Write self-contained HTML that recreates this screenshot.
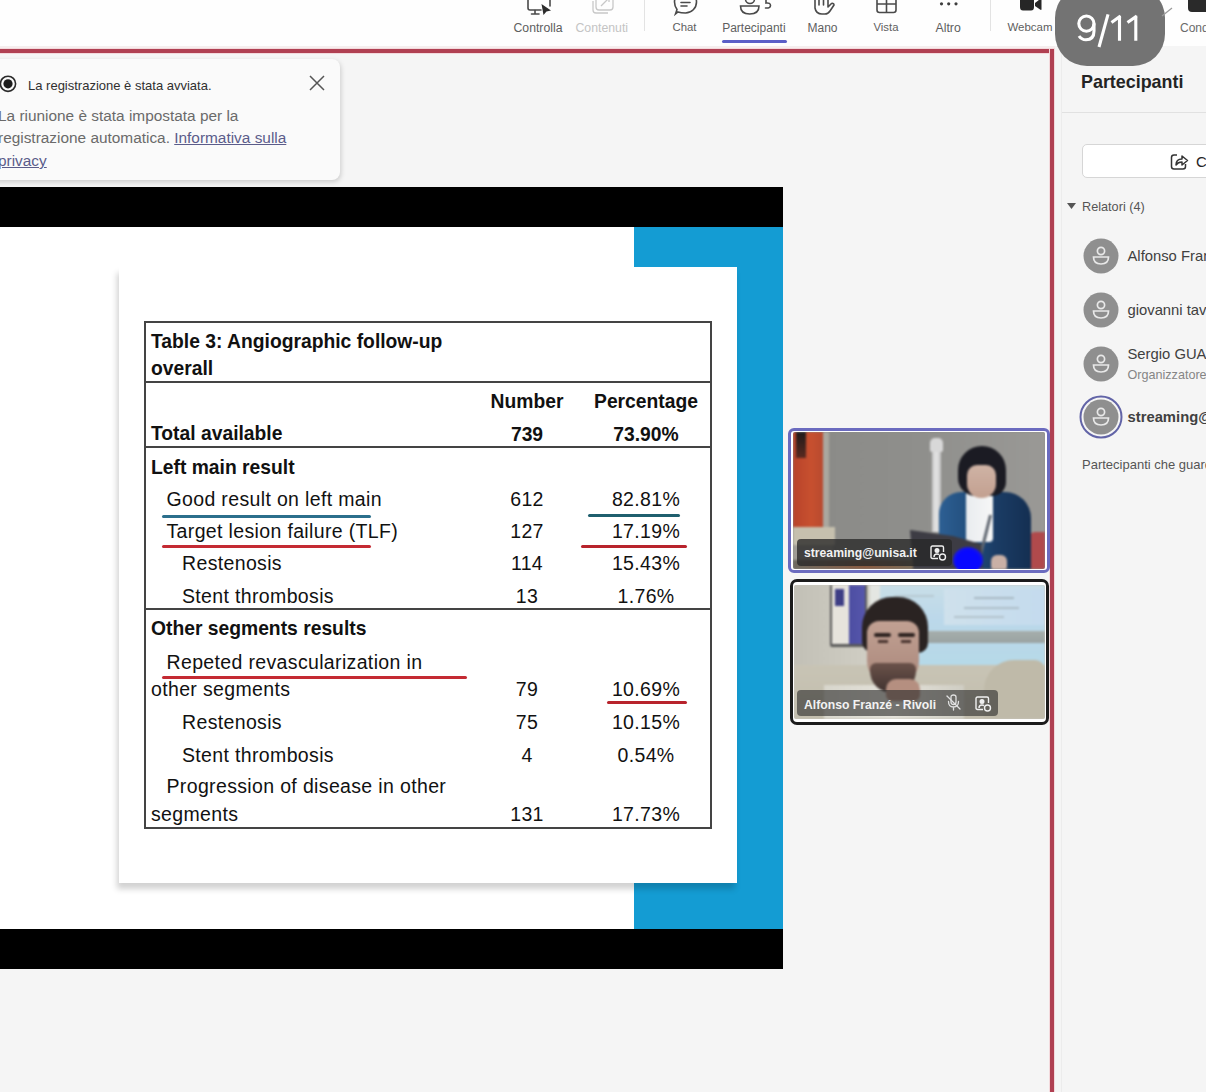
<!DOCTYPE html>
<html><head><meta charset="utf-8"><style>
html,body{margin:0;padding:0}
body{width:1206px;height:1092px;position:relative;overflow:hidden;background:#f5f5f5;font-family:"Liberation Sans",sans-serif}
.t{position:absolute;white-space:nowrap;line-height:1}
.r{position:absolute}
</style></head><body>
<div class="r" style="left:0px;top:0px;width:1206px;height:46px;background:#fefefe"></div>
<div class="r" style="left:0px;top:46px;width:1206px;height:3px;background:#f6eeee"></div>
<div class="t " style="left:513.5px;top:21.64px;font-size:12.24px;font-weight:normal;color:#5f5f5f;">Controlla</div>
<div class="t " style="left:575.5px;top:21.60px;font-size:12.29px;font-weight:normal;color:#c4c4c4;">Contenuti</div>
<div class="t " style="left:672.5px;top:22.38px;font-size:11.36px;font-weight:normal;color:#5f5f5f;">Chat</div>
<div class="t " style="left:722.2px;top:21.84px;font-size:12.0px;font-weight:normal;color:#5f5f5f;">Partecipanti</div>
<div class="t " style="left:807.5px;top:21.84px;font-size:12px;font-weight:normal;color:#5f5f5f;">Mano</div>
<div class="t " style="left:873.5px;top:22.40px;font-size:11.34px;font-weight:normal;color:#5f5f5f;">Vista</div>
<div class="t " style="left:935.5px;top:21.59px;font-size:12.3px;font-weight:normal;color:#5f5f5f;">Altro</div>
<div class="t " style="left:1007.5px;top:22.30px;font-size:11.46px;font-weight:normal;color:#5f5f5f;">Webcam</div>
<div class="r" style="left:644px;top:0px;width:1px;height:31px;background:#e3e3e3"></div>
<div class="r" style="left:990px;top:0px;width:1px;height:31px;background:#e3e3e3"></div>
<div class="r" style="left:722px;top:40px;width:65px;height:3px;background:#5b5fc7;border-radius:2px"></div>
<div class="r" style="left:0px;top:53px;width:1050px;height:1039px;background:#f5f5f5"></div>
<div class="r" style="left:0px;top:48px;width:1055px;height:6px;background:#f3d9dc"></div>
<div class="r" style="left:0px;top:49px;width:1054px;height:4px;background:#b04052"></div>
<div class="r" style="left:1049px;top:49px;width:6px;height:1043px;background:#f3d9dc"></div>
<div class="r" style="left:1050px;top:49px;width:4px;height:1043px;background:#b04052"></div>
<div class="r" style="left:1055px;top:46px;width:151px;height:1046px;background:#f5f5f5"></div>
<div class="r" style="left:1061px;top:46px;width:1px;height:1046px;background:#ececec"></div>
<div class="t " style="left:1081px;top:73.85px;font-size:17.9px;font-weight:bold;color:#242424;">Partecipanti</div>
<div class="r" style="left:1062px;top:112px;width:144px;height:1px;background:#e1e1e1"></div>
<div class="r" style="left:1082px;top:144px;width:140px;height:34px;background:#fff;border:1px solid #d6d6d6;border-radius:5px;box-sizing:border-box"></div>
<div class="t " style="left:1196px;top:154.30px;font-size:15px;font-weight:normal;color:#242424;">C</div>
<div class="t " style="left:1082px;top:201.25px;font-size:12.7px;font-weight:normal;color:#555;">Relatori (4)</div>
<div class="t " style="left:1127.5px;top:249.47px;font-size:14.8px;font-weight:normal;color:#404040;">Alfonso Franzé - Rivoli</div>
<div class="t " style="left:1127.5px;top:303.47px;font-size:14.8px;font-weight:normal;color:#404040;">giovanni tavolieri</div>
<div class="t " style="left:1127.5px;top:347.47px;font-size:14.8px;font-weight:normal;color:#404040;">Sergio GUARINI</div>
<div class="t " style="left:1127.5px;top:368.83px;font-size:12.6px;font-weight:normal;color:#858585;">Organizzatore</div>
<div class="t " style="left:1127.5px;top:410.47px;font-size:14.8px;font-weight:bold;color:#404040;">streaming@unisa.it</div>
<div class="t " style="left:1082px;top:458.00px;font-size:13px;font-weight:normal;color:#555;">Partecipanti che guardano</div>
<div class="r" style="left:-12px;top:59px;width:352px;height:121px;background:#fafafa;border-radius:8px;box-shadow:1px 2px 5px rgba(0,0,0,0.17)"></div>
<div class="t " style="left:28px;top:78.50px;font-size:13.0px;font-weight:normal;color:#303030;">La registrazione è stata avviata.</div>
<div class="t " style="left:-2px;top:107.96px;font-size:15.4px;font-weight:normal;color:#6a6a6a;">La riunione è stata impostata per la</div>
<div class="t " style="left:-2px;top:130.46px;font-size:15.4px;font-weight:normal;color:#6a6a6a;">registrazione automatica. <span style="color:#5b5c8a;text-decoration:underline">Informativa sulla</span></div>
<div class="t " style="left:-2px;top:152.96px;font-size:15.4px;font-weight:normal;color:#6a6a6a;"><span style="color:#5b5c8a;text-decoration:underline">privacy</span></div>
<div class="r" style="left:0px;top:187px;width:783px;height:40px;background:#000"></div>
<div class="r" style="left:0px;top:227px;width:783px;height:702px;background:#fff"></div>
<div class="r" style="left:634px;top:227px;width:149px;height:702px;background:#149cd3"></div>
<div class="r" style="left:119px;top:267px;width:618px;height:616px;background:#fff;box-shadow:-2px 6px 6px rgba(0,0,0,0.18)"></div>
<div class="r" style="left:0px;top:929px;width:783px;height:40px;background:#000"></div>
<div class="r" style="left:144px;top:321px;width:568px;height:508px;border:2px solid #444;box-sizing:border-box"></div>
<div class="r" style="left:144px;top:381px;width:568px;height:2px;background:#444"></div>
<div class="r" style="left:144px;top:446px;width:568px;height:2px;background:#444"></div>
<div class="r" style="left:144px;top:608px;width:568px;height:2px;background:#444"></div>
<div class="t " style="left:151px;top:331.76px;font-size:19.3px;font-weight:bold;color:#111;">Table 3: Angiographic follow-up</div>
<div class="t " style="left:151px;top:359.06px;font-size:19.3px;font-weight:bold;color:#111;">overall</div>
<div class="t" style="left:427.0px;width:200px;text-align:center;top:392.36px;font-size:19.3px;font-weight:bold;color:#111;">Number</div>
<div class="t" style="left:546.0px;width:200px;text-align:center;top:392.36px;font-size:19.3px;font-weight:bold;color:#111;">Percentage</div>
<div class="t " style="left:151px;top:424.36px;font-size:19.3px;font-weight:bold;color:#111;">Total available</div>
<div class="t" style="left:427.0px;width:200px;text-align:center;top:425.36px;font-size:19.3px;font-weight:bold;color:#111;">739</div>
<div class="t" style="left:546.0px;width:200px;text-align:center;top:425.36px;font-size:19.3px;font-weight:bold;color:#111;">73.90%</div>
<div class="t " style="left:151px;top:457.86px;font-size:19.3px;font-weight:bold;color:#111;">Left main result</div>
<div class="t " style="left:166.5px;top:489.89px;font-size:19.5px;font-weight:normal;color:#111;letter-spacing:0.35px">Good result on left main</div>
<div class="t" style="left:427.0px;width:200px;text-align:center;top:489.89px;font-size:19.5px;font-weight:normal;color:#111;letter-spacing:0.35px">612</div>
<div class="t" style="left:546.0px;width:200px;text-align:center;top:489.89px;font-size:19.5px;font-weight:normal;color:#111;letter-spacing:0.35px">82.81%</div>
<div class="t " style="left:166.5px;top:521.99px;font-size:19.5px;font-weight:normal;color:#111;letter-spacing:0.35px">Target lesion failure (TLF)</div>
<div class="t" style="left:427.0px;width:200px;text-align:center;top:521.99px;font-size:19.5px;font-weight:normal;color:#111;letter-spacing:0.35px">127</div>
<div class="t" style="left:546.0px;width:200px;text-align:center;top:521.99px;font-size:19.5px;font-weight:normal;color:#111;letter-spacing:0.35px">17.19%</div>
<div class="t " style="left:182px;top:554.19px;font-size:19.5px;font-weight:normal;color:#111;letter-spacing:0.35px">Restenosis</div>
<div class="t" style="left:427.0px;width:200px;text-align:center;top:554.19px;font-size:19.5px;font-weight:normal;color:#111;letter-spacing:0.35px">114</div>
<div class="t" style="left:546.0px;width:200px;text-align:center;top:554.19px;font-size:19.5px;font-weight:normal;color:#111;letter-spacing:0.35px">15.43%</div>
<div class="t " style="left:182px;top:587.19px;font-size:19.5px;font-weight:normal;color:#111;letter-spacing:0.35px">Stent thrombosis</div>
<div class="t" style="left:427.0px;width:200px;text-align:center;top:587.19px;font-size:19.5px;font-weight:normal;color:#111;letter-spacing:0.35px">13</div>
<div class="t" style="left:546.0px;width:200px;text-align:center;top:587.19px;font-size:19.5px;font-weight:normal;color:#111;letter-spacing:0.35px">1.76%</div>
<div class="t " style="left:151px;top:618.66px;font-size:19.3px;font-weight:bold;color:#111;">Other segments results</div>
<div class="t " style="left:166.5px;top:652.59px;font-size:19.5px;font-weight:normal;color:#111;letter-spacing:0.35px">Repeted revascularization in</div>
<div class="t " style="left:151px;top:680.09px;font-size:19.5px;font-weight:normal;color:#111;letter-spacing:0.35px">other segments</div>
<div class="t" style="left:427.0px;width:200px;text-align:center;top:680.09px;font-size:19.5px;font-weight:normal;color:#111;letter-spacing:0.35px">79</div>
<div class="t" style="left:546.0px;width:200px;text-align:center;top:680.09px;font-size:19.5px;font-weight:normal;color:#111;letter-spacing:0.35px">10.69%</div>
<div class="t " style="left:182px;top:712.99px;font-size:19.5px;font-weight:normal;color:#111;letter-spacing:0.35px">Restenosis</div>
<div class="t" style="left:427.0px;width:200px;text-align:center;top:712.99px;font-size:19.5px;font-weight:normal;color:#111;letter-spacing:0.35px">75</div>
<div class="t" style="left:546.0px;width:200px;text-align:center;top:712.99px;font-size:19.5px;font-weight:normal;color:#111;letter-spacing:0.35px">10.15%</div>
<div class="t " style="left:182px;top:745.99px;font-size:19.5px;font-weight:normal;color:#111;letter-spacing:0.35px">Stent thrombosis</div>
<div class="t" style="left:427.0px;width:200px;text-align:center;top:745.99px;font-size:19.5px;font-weight:normal;color:#111;letter-spacing:0.35px">4</div>
<div class="t" style="left:546.0px;width:200px;text-align:center;top:745.99px;font-size:19.5px;font-weight:normal;color:#111;letter-spacing:0.35px">0.54%</div>
<div class="t " style="left:166.5px;top:777.19px;font-size:19.5px;font-weight:normal;color:#111;letter-spacing:0.35px">Progression of disease in other</div>
<div class="t " style="left:151px;top:805.49px;font-size:19.5px;font-weight:normal;color:#111;letter-spacing:0.35px">segments</div>
<div class="t" style="left:427.0px;width:200px;text-align:center;top:805.49px;font-size:19.5px;font-weight:normal;color:#111;letter-spacing:0.35px">131</div>
<div class="t" style="left:546.0px;width:200px;text-align:center;top:805.49px;font-size:19.5px;font-weight:normal;color:#111;letter-spacing:0.35px">17.73%</div>
<div class="r" style="left:162px;top:514.5px;width:209px;height:3px;background:#2b6f8c;border-radius:2px"></div>
<div class="r" style="left:588px;top:514px;width:92px;height:3px;background:#1f5f6e;border-radius:2px"></div>
<div class="r" style="left:162px;top:545px;width:209px;height:3px;background:#c42a33;border-radius:2px"></div>
<div class="r" style="left:581px;top:544.5px;width:106px;height:3px;background:#b8232c;border-radius:2px"></div>
<div class="r" style="left:162px;top:676px;width:305px;height:3px;background:#c42a33;border-radius:2px"></div>
<div class="r" style="left:607px;top:700.5px;width:80px;height:3px;background:#b8232c;border-radius:2px"></div>
<div class="r" style="left:788px;top:428px;width:262px;height:145px;border:3px solid #6b6bbf;border-radius:6px;box-sizing:border-box;background:#fff"></div>
<div class="r" style="left:793px;top:432px;width:252px;height:137px;overflow:hidden;border-radius:2px;background:#8d8d8a"><div class="r" style="left:0;top:0;width:252px;height:137px;filter:blur(1.2px);background:linear-gradient(90deg,#8a8a87 0%,#8f8f8c 50%,#9a9996 100%)"><div class="r" style="left:0px;top:0px;width:30px;height:96px;background:linear-gradient(90deg,#b8432a,#c7502f 60%,#b84a30)"></div>
<div class="r" style="left:3px;top:0px;width:10px;height:26px;background:linear-gradient(180deg,#1e1a1a,#5a2a20)"></div>
<div class="r" style="left:30px;top:0px;width:6px;height:100px;background:#aaa79f"></div>
<div class="r" style="left:0px;top:95px;width:42px;height:18px;background:#c6c0ae"></div>
<div class="r" style="left:0px;top:113px;width:40px;height:24px;background:#9f9c95"></div>
<div class="r" style="left:139px;top:16px;width:9px;height:84px;background:linear-gradient(90deg,#c8c8c8,#e6e6e6,#c0c0c0)"></div>
<div class="r" style="left:137px;top:6px;width:13px;height:14px;background:#d8d8d8;border-radius:5px 5px 2px 2px"></div>
<div class="r" style="left:236px;top:100px;width:16px;height:37px;background:#b04a4c;border-radius:6px 0 0 0"></div>
<div class="r" style="left:146px;top:60px;width:92px;height:77px;background:linear-gradient(90deg,#2d5f93 0%,#23507f 30%,#1b3d66 60%,#142f52 100%);border-radius:22px 26px 0 0"></div>
<div class="r" style="left:173px;top:60px;width:27px;height:50px;background:linear-gradient(90deg,#e9ecef,#f7f7f7);border-radius:0 0 4px 4px"></div>
<div class="r" style="left:165px;top:14px;width:48px;height:50px;background:#1b1b23;border-radius:24px 24px 14px 18px"></div>
<div class="r" style="left:174px;top:33px;width:29px;height:33px;background:linear-gradient(180deg,#cfb3a5,#c3a090);border-radius:10px 10px 14px 14px"></div>
<div class="r" style="left:196px;top:83px;width:3px;height:55px;background:#5f6670;transform:rotate(14deg);transform-origin:top"></div>
<svg class="r" style="left:0;top:0" width="252" height="137"><path d="M117 98 L160 104 L188 112 L190 137 L120 137 Z" fill="#3d3c44"/></svg><div class="r" style="left:160px;top:115px;width:30px;height:26px;background:radial-gradient(ellipse at 50% 60%,#0808ff 55%,#2222c8 80%,#3d3c44 100%);border-radius:50%"></div>
<div class="r" style="left:198px;top:123px;width:16px;height:14px;background:#c9b0a6;border-radius:6px 6px 2px 2px"></div>
<div class="r" style="left:0px;top:128px;width:120px;height:9px;background:linear-gradient(90deg,#6d6a60,#8a5a40 60%,#7a6a55)"></div>
</div></div>
<div class="r" style="left:790px;top:579px;width:259px;height:146px;border:3px solid #1b1b1b;border-radius:7px;box-sizing:border-box;background:#fff"></div>
<div class="r" style="left:794px;top:585px;width:251px;height:134px;overflow:hidden;border-radius:2px;background:#c8c6bc"><div class="r" style="left:0;top:0;width:251px;height:134px;filter:blur(1.2px);background:linear-gradient(90deg,#c2c0b6,#d0cec4 30%,#c9c6bb)"><div class="r" style="left:76px;top:0px;width:175px;height:80px;background:linear-gradient(180deg,#c9dfe8 0%,#bcd8ea 40%,#b6d9e8 100%)"></div>
<div class="r" style="left:150px;top:4px;width:101px;height:36px;background:linear-gradient(90deg,#cfe1ec,#c4dbee)"></div>
<div class="r" style="left:180px;top:12px;width:40px;height:2px;background:#a8b9c4"></div>
<div class="r" style="left:170px;top:22px;width:55px;height:2px;background:#aebfc9"></div>
<div class="r" style="left:160px;top:31px;width:50px;height:2px;background:#b3c3cc"></div>
<div class="r" style="left:100px;top:10px;width:40px;height:2px;background:#b7c9d2"></div>
<div class="r" style="left:92px;top:20px;width:30px;height:2px;background:#b7c9d2"></div>
<div class="r" style="left:120px;top:46px;width:131px;height:12px;background:linear-gradient(180deg,#a6aeac,#9aa3a2)"></div>
<div class="r" style="left:76px;top:0px;width:10px;height:80px;background:#e4e6e2"></div>
<div class="r" style="left:0px;top:80px;width:251px;height:54px;background:linear-gradient(180deg,#c8c4b5,#c2bdad)"></div>
<div class="r" style="left:190px;top:75px;width:61px;height:59px;background:#bfbaa9;border-radius:30px 10px 0 0"></div>
<div class="r" style="left:36px;top:0px;width:37px;height:62px;background:#5a5a5a;border-radius:0 0 2px 2px"></div>
<div class="r" style="left:38px;top:0px;width:33px;height:59px;background:linear-gradient(90deg,#e6e3dc 0%,#e6e3dc 52%,#4d4ea2 53%,#5656ac 100%)"></div>
<div class="r" style="left:41px;top:4px;width:9px;height:17px;background:#3d3d85"></div>
<div class="r" style="left:30px;top:100px;width:140px;height:34px;background:linear-gradient(90deg,#d8d6cc,#e4e2da 50%,#cfcdc3)"></div>
<div class="r" style="left:68px;top:12px;width:66px;height:56px;background:#2a2322;border-radius:30px 30px 10px 12px"></div>
<div class="r" style="left:73px;top:36px;width:52px;height:64px;background:linear-gradient(180deg,#c2a193,#a9877b);border-radius:12px 12px 24px 24px"></div>
<div class="r" style="left:80px;top:48px;width:17px;height:4px;background:#2e2320;border-radius:2px"></div>
<div class="r" style="left:104px;top:48px;width:17px;height:4px;background:#2e2320;border-radius:2px"></div>
<div class="r" style="left:84px;top:55px;width:10px;height:3px;background:#4a3530"></div>
<div class="r" style="left:107px;top:55px;width:10px;height:3px;background:#4a3530"></div>
<div class="r" style="left:76px;top:78px;width:46px;height:30px;background:linear-gradient(180deg,#6b524a,#3f322f);border-radius:6px 6px 22px 22px"></div>
<div class="r" style="left:92px;top:94px;width:34px;height:22px;background:#b58f80;border-radius:10px 10px 6px 6px"></div>
</div></div>
<div class="r" style="left:797px;top:539px;width:155px;height:27px;background:rgba(40,40,40,0.78);border-radius:4px"></div>
<div class="t " style="left:804px;top:547.17px;font-size:12.2px;font-weight:bold;color:#f2f2f2;">streaming@unisa.it</div>
<div class="r" style="left:797px;top:690px;width:201px;height:26px;background:rgba(40,40,40,0.6);border-radius:4px"></div>
<div class="t " style="left:804px;top:698.67px;font-size:12.2px;font-weight:bold;color:#f2f2f2;">Alfonso Franzé - Rivoli</div>
<svg class="r" style="left:930px;top:545px" width="18" height="16"><g fill="none" stroke="#f0f0f0" stroke-width="1.4"><path d="M8 13.5 H2.5 Q1 13.5 1 12 V2.5 Q1 1 2.5 1 H12 Q13.5 1 13.5 2.5 V7"/><circle cx="7" cy="5.5" r="1.8" fill="#f0f0f0"/><path d="M4 12 Q4 9 7 9 Q8 9 9 9.5"/><circle cx="12.5" cy="12" r="3"/></g></svg>
<svg class="r" style="left:975px;top:696px" width="18" height="16"><g fill="none" stroke="#f0f0f0" stroke-width="1.4"><path d="M8 13.5 H2.5 Q1 13.5 1 12 V2.5 Q1 1 2.5 1 H12 Q13.5 1 13.5 2.5 V7"/><circle cx="7" cy="5.5" r="1.8" fill="#f0f0f0"/><path d="M4 12 Q4 9 7 9 Q8 9 9 9.5"/><circle cx="12.5" cy="12" r="3"/></g></svg>
<svg class="r" style="left:945px;top:694px" width="18" height="18"><g fill="none" stroke="#e0e0e0" stroke-width="1.3" stroke-linecap="round"><path d="M6 3 Q6 1 8.5 1 Q11 1 11 3 V8 Q11 10.5 8.5 10.5 Q6 10.5 6 8 Z"/><path d="M3.5 7.5 Q3.5 13 8.5 13 Q13.5 13 13.5 7.5 M8.5 13 V16"/><path d="M2 2 L15 15"/></g></svg>
<div class="r" style="left:1054.5px;top:-14px;width:110px;height:80px;background:#737373;border-radius:32px"></div>
<svg class="r" style="left:0;top:0" width="1206" height="70"><g fill="none" stroke="#fff" stroke-width="3.1" stroke-linecap="butt"><circle cx="1086.4" cy="23.6" r="7.6"/><path d="M1094 23.6 V31 Q1094 39.8 1086 39.8 Q1081.5 39.8 1079 36"/><path d="M1108 14.3 L1099 47"/><path d="M1119.5 15.8 V40.8 M1111.5 22.5 L1120.5 16"/><path d="M1135.8 15.8 V40.8 M1127.5 22.5 L1136.8 16"/></g></svg>
<svg class="r" style="left:0;top:0" width="1206" height="46" viewBox="0 0 1206 46"><g fill="none" stroke="#4a4a4a" stroke-width="1.6" stroke-linecap="round"><path d="M528 -4 V8 Q528 10 530 10 H541"/><path d="M550 -4 V6"/><path d="M535 10.5 V13.5 M531.5 14 H539"/></g><path d="M541.5 4 L551 10.5 L546.5 11.5 L543.5 15 Z" fill="#2c2c2c"/><g fill="none" stroke="#c8c8c8" stroke-width="1.3"><rect x="596" y="-6" width="17" height="16" rx="3"/><path d="M593 1 V10 Q593 13 596 13 H608"/><path d="M601 6 L609 -2 M605 -2 H609 V2"/></g><g fill="none" stroke="#4a4a4a" stroke-width="1.6" stroke-linecap="round"><path d="M675.5 14 L677 9.5 Q674.5 6 674.5 2 A11 11 0 1 1 685.5 13 Q681 13 678 12 Z"/><path d="M681 2.5 H690 M681 6 H687"/></g><g fill="none" stroke="#4a4a4a" stroke-width="1.6" stroke-linecap="round"><circle cx="750" cy="-1" r="4.5"/><path d="M740.5 6 H759 Q759 14 749.7 14 Q740.5 14 740.5 6 Z"/><path d="M769.5 -1 H766 V3 Q770.5 2.5 770.5 5.5 Q770.5 8.5 765.5 8"/></g><g fill="none" stroke="#4a4a4a" stroke-width="1.6" stroke-linecap="round" stroke-linejoin="round"><path d="M815 -2 V8 Q816 14 822 14 H825 Q828 14 830 11 L834 5 Q834 3 831.5 3.5 L828 7 V-3"/><path d="M819 -4 V5 M823.5 -4 V5"/></g><g fill="none" stroke="#4a4a4a" stroke-width="1.6"><path d="M877 -3 V10 Q877 12.5 879.5 12.5 H893.5 Q896 12.5 896 10 V-3"/><path d="M877 4 H896 M886.5 -3 V12.5"/></g><g fill="#3e3e3e"><circle cx="941.5" cy="3.8" r="1.6"/><circle cx="948.7" cy="3.8" r="1.6"/><circle cx="956" cy="3.8" r="1.6"/></g><path d="M1020 -4 H1034 V7 Q1034 10.5 1031 10.5 H1023 Q1020 10.5 1020 7 Z" fill="#262626"/><path d="M1035 3 L1041.5 -2 V9 Q1041.5 10.5 1040 9.5 L1035 6 Z" fill="#262626"/><path d="M1188 -4 H1206 V12 H1192 Q1188 12 1188 8 Z" fill="#2a2a2a"/></svg>
<div class="t " style="left:1180px;top:21.84px;font-size:12px;font-weight:normal;color:#6a6a6a;">Cond</div>
<svg class="r" style="left:1160;top:6" width="16" height="12"><path d="M2 10 L12 2" stroke="#9a9a9a" stroke-width="1.3"/></svg>
<svg class="r" style="left:-6;top:70" width="30" height="30"><circle cx="14" cy="13.8" r="7.6" fill="none" stroke="#2a2a2a" stroke-width="1.6"/><circle cx="14" cy="13.8" r="4.6" fill="#1c1c1c"/></svg>
<svg class="r" style="left:306;top:72" width="22" height="22"><path d="M4 4 L18 18 M18 4 L4 18" stroke="#555" stroke-width="1.5"/></svg>
<svg class="r" style="left:1066;top:201" width="12" height="12"><path d="M1 2 H10 L5.5 8 Z" fill="#555"/></svg>
<svg class="r" style="left:1168;top:150" width="22" height="22"><g fill="none" stroke="#333" stroke-width="1.5" stroke-linejoin="round"><path d="M9 5 H6 Q3.5 5 3.5 7.5 V16.5 Q3.5 19 6 19 H15 Q17.5 19 17.5 16.5 V14"/><path d="M8 15 Q8 9 14 9 V6 L19.5 10.5 L14 15 V12 Q10 12 8 15 Z"/></g></svg>
<svg class="r" style="left:1078.5;top:234" width="44" height="44"><circle cx="22" cy="22" r="17.5" fill="#8f8f8f"/><g fill="none" stroke="#e8e8e8" stroke-width="1.7"><circle cx="22" cy="17" r="3.6"/><path d="M14.5 23 H29.5 Q29.5 30 22 30 Q14.5 30 14.5 23 Z"/></g></svg>
<svg class="r" style="left:1078.5;top:288" width="44" height="44"><circle cx="22" cy="22" r="17.5" fill="#8f8f8f"/><g fill="none" stroke="#e8e8e8" stroke-width="1.7"><circle cx="22" cy="17" r="3.6"/><path d="M14.5 23 H29.5 Q29.5 30 22 30 Q14.5 30 14.5 23 Z"/></g></svg>
<svg class="r" style="left:1078.5;top:342" width="44" height="44"><circle cx="22" cy="22" r="17.5" fill="#8f8f8f"/><g fill="none" stroke="#e8e8e8" stroke-width="1.7"><circle cx="22" cy="17" r="3.6"/><path d="M14.5 23 H29.5 Q29.5 30 22 30 Q14.5 30 14.5 23 Z"/></g></svg>
<svg class="r" style="left:1078.5;top:395" width="44" height="44"><circle cx="22" cy="22" r="20.5" fill="none" stroke="#6264a7" stroke-width="2"/><circle cx="22" cy="22" r="17.5" fill="#8f8f8f"/><g fill="none" stroke="#e8e8e8" stroke-width="1.7"><circle cx="22" cy="17" r="3.6"/><path d="M14.5 23 H29.5 Q29.5 30 22 30 Q14.5 30 14.5 23 Z"/></g></svg>
</body></html>
